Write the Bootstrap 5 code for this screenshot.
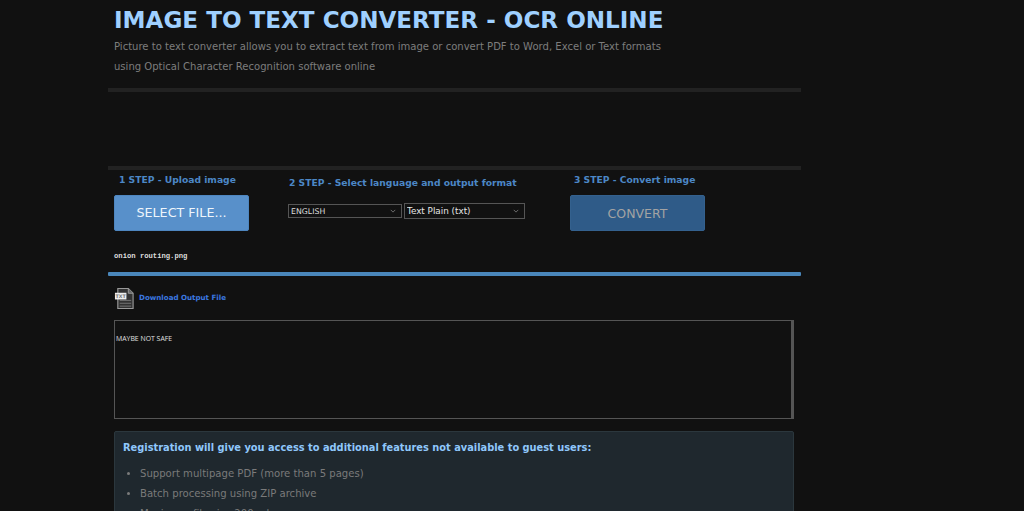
<!DOCTYPE html>
<html lang="en">
<head>
<meta charset="utf-8">
<title>Image to Text Converter</title>
<link href="https://cdn.jsdelivr.net/npm/bootstrap@5.3.0/dist/css/bootstrap.min.css" rel="stylesheet">
<style>
html,body{height:511px;overflow:hidden;background:#111;}
body{font-family:"DejaVu Sans",sans-serif;color:#808080;}
.ocr-wrap{width:693px;margin-left:108px;}
.ocr-pad{padding-left:6px;}
.ocr-title{font-size:23.08px;font-weight:700;color:#9fd0ff;margin:0;padding-top:6px;line-height:28px;white-space:nowrap;}
.ocr-intro{font-size:10.05px;line-height:20px;color:#7d7d7d;margin:3px 0 0;white-space:nowrap;}
.ocr-rule{height:4px;background:#222;margin:0;border:0;opacity:1;}
.ocr-rule-top{margin-top:11px;}
.ocr-ad{height:74px;}
.ocr-steps{height:102px;padding-top:3px;}
.ocr-step{font-size:9.2px;font-weight:700;color:#4c87c6;line-height:14px;margin:0;white-space:nowrap;}
.ocr-step-c1{padding-left:5px;}
.ocr-step-c2{padding-left:1px;}
.ocr-step-c3{padding-left:4px;}
.ocr-c1{width:174px;}
.ocr-c2{width:282px;padding-top:3px;}
.ocr-c3{flex:1;}
.ocr-btn{width:135px;height:36px;margin-top:8px;border:1px solid #4e86bf;border-radius:2px;background:#5890ca;color:#eef5fb;font-size:12.7px;line-height:1;padding:0;--bs-btn-hover-bg:#5890ca;--bs-btn-hover-color:#eef5fb;}
.ocr-btn-off{background:#2f5b88;border-color:#34618e;color:#a3a3a3;padding-top:3px;font-size:12.5px;}
.ocr-controls{margin-top:13px;gap:2px;}
.ocr-select{height:14px;font-size:7.8px;padding:1px 0 0 2px;background-color:#111;color:#ddd;border:1px solid #555;border-radius:0;line-height:11px;font-family:"DejaVu Sans",sans-serif;background-size:8px 6px;background-position:right 4px center;
background-image:url("data:image/svg+xml,%3csvg xmlns='http://www.w3.org/2000/svg' viewBox='0 0 16 16'%3e%3cpath fill='none' stroke='%23888' stroke-width='2' d='m2 5 6 6 6-6'/%3e%3c/svg%3e");}
.ocr-sel-a{width:114px;}
.ocr-sel-b{width:121px;font-size:8.8px;height:16px;line-height:13px;color:#e6e6e6;}
.ocr-file{font-family:"Liberation Mono",monospace;font-size:7.2px;font-weight:700;color:#ddd;line-height:10px;margin:0;}
.ocr-rule-blue{height:4px;background:#4a87bb;border-radius:1px;}
.ocr-dl{height:44px;}
.ocr-dl a{font-size:7.1px;font-weight:700;color:#3b78e0;text-decoration:none;}
.ocr-text{display:block;width:680px;height:99px;background:#111;border:1px solid #555;border-right-width:3px;border-radius:0;color:#e0e0e0;font-family:"Open Sans",sans-serif;font-size:6.9px;line-height:12px;padding:12px 1px;resize:none;outline:0;}
.ocr-note{width:680px;margin-top:12px;background:#1f282e;border:1px solid #2b373d;border-radius:2px;padding:9px 8px;height:200px;}
.ocr-note h2{font-size:9.83px;font-weight:700;color:#8fc7fb;line-height:14px;margin:0 0 9px;white-space:nowrap;}
.ocr-note ul{margin:0;padding-left:17px;font-size:10.1px;line-height:20px;color:#7a7a7a;}
</style>
</head>
<body>
<main class="ocr-wrap">
  <header class="ocr-pad">
    <h1 class="ocr-title">IMAGE TO TEXT CONVERTER - OCR ONLINE</h1>
    <p class="ocr-intro">Picture to text converter allows you to extract text from image or convert PDF to Word, Excel or Text formats<br>using Optical Character Recognition software online</p>
  </header>
  <hr class="ocr-rule ocr-rule-top">
  <div class="ocr-ad"></div>
  <hr class="ocr-rule">
  <section class="ocr-steps ocr-pad d-flex">
    <div class="ocr-c1">
      <p class="ocr-step ocr-step-c1">1 STEP - Upload image</p>
      <button type="button" class="btn ocr-btn">SELECT FILE...</button>
      <p class="ocr-file mt-3 pt-1">onion routing.png</p>
    </div>
    <div class="ocr-c2">
      <p class="ocr-step ocr-step-c2">2 STEP - Select language and output format</p>
      <div class="d-flex align-items-center ocr-controls">
        <select class="form-select ocr-select ocr-sel-a" aria-label="Language"><option>ENGLISH</option></select>
        <select class="form-select ocr-select ocr-sel-b" aria-label="Output format"><option>Text Plain (txt)</option></select>
      </div>
    </div>
    <div class="ocr-c3">
      <p class="ocr-step ocr-step-c3">3 STEP - Convert image</p>
      <button type="button" class="btn ocr-btn ocr-btn-off">CONVERT</button>
    </div>
  </section>
  <div class="ocr-rule-blue"></div>
  <div class="ocr-dl ocr-pad d-flex align-items-center gap-1">
    <svg width="21" height="23" viewBox="0 0 22 24" aria-hidden="true">
      <path d="M4 1.5h11l5 5v16H4z" fill="#333" stroke="#999" stroke-width="1.2"/>
      <path d="M15 1.5v5h5" fill="#666" stroke="#999" stroke-width="1"/>
      <path d="M6 14h12M6 17h12M6 20h12" stroke="#777" stroke-width="1"/>
      <rect x="1" y="6" width="12" height="7" fill="#eee"/>
      <text x="7" y="11.5" font-size="5" font-weight="700" text-anchor="middle" fill="#777" font-family="DejaVu Sans">TXT</text>
    </svg>
    <a href="#">Download Output File</a>
  </div>
  <div class="ocr-pad">
    <textarea class="ocr-text" aria-label="Output" readonly>
MAYBE NOT SAFE</textarea>
    <section class="ocr-note">
      <h2>Registration will give you access to additional features not available to guest users:</h2>
      <ul>
        <li>Support multipage PDF (more than 5 pages)</li>
        <li>Batch processing using ZIP archive</li>
        <li>Maximum file size 200 mb</li>
      </ul>
    </section>
  </div>
</main>
<script src="https://cdn.jsdelivr.net/npm/bootstrap@5.3.0/dist/js/bootstrap.bundle.min.js"></script>
</body>
</html>
